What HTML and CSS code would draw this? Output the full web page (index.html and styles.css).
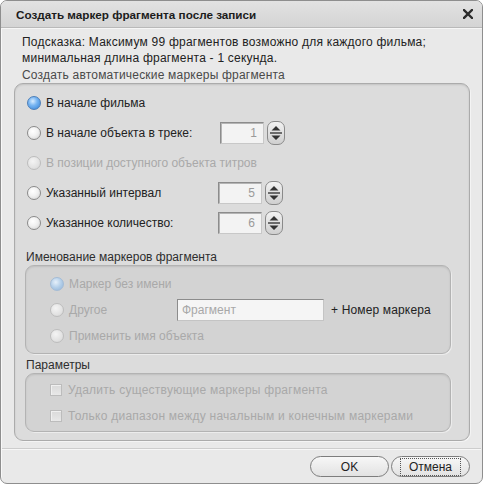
FILE: index.html
```html
<!DOCTYPE html>
<html lang="ru">
<head>
<meta charset="utf-8">
<link rel="stylesheet" href="styles.css">
</head>
<body>
<div class="window">
  <div class="titlebar">
    <span class="title">Создать маркер фрагмента после записи</span>
    <svg class="close" width="10" height="10" viewBox="0 0 10 10"><path d="M1 1 L9 9 M9 1 L1 9" stroke="#2b2b2b" stroke-width="2.4" stroke-linecap="square"/></svg>
  </div>
  <div class="body">
    <p class="hint">Подсказка: Максимум 99 фрагментов возможно для каждого фильма;<br>минимальная длина фрагмента - 1 секунда.</p>
    <div class="group-label">Создать автоматические маркеры фрагмента</div>
    <div class="group main">
      <div class="row"><span class="radio checked"></span><span class="lbl">В начале фильма</span></div>
      <div class="row"><span class="radio"></span><span class="lbl w1">В начале объекта в треке:</span><span class="num">1</span><span class="spin"><svg width="18" height="24" viewBox="0 0 18 24"><path d="M9 5 L13.5 9.5 H4.5 Z M9 19 L13.5 14.5 H4.5 Z" fill="#333"/><path d="M3 12 H15" stroke="#444" stroke-width="1.5"/></svg></span></div>
      <div class="row disabled"><span class="radio"></span><span class="lbl">В позиции доступного объекта титров</span></div>
      <div class="row"><span class="radio"></span><span class="lbl w2">Указанный интервал</span><span class="num">5</span><span class="spin"><svg width="18" height="24" viewBox="0 0 18 24"><path d="M9 5 L13.5 9.5 H4.5 Z M9 19 L13.5 14.5 H4.5 Z" fill="#333"/><path d="M3 12 H15" stroke="#444" stroke-width="1.5"/></svg></span></div>
      <div class="row"><span class="radio"></span><span class="lbl w2">Указанное количество:</span><span class="num">6</span><span class="spin"><svg width="18" height="24" viewBox="0 0 18 24"><path d="M9 5 L13.5 9.5 H4.5 Z M9 19 L13.5 14.5 H4.5 Z" fill="#333"/><path d="M3 12 H15" stroke="#444" stroke-width="1.5"/></svg></span></div>

      <div class="sub-label first">Именование маркеров фрагмента</div>
      <div class="group sub naming">
        <div class="srow disabled"><span class="radio checked"></span><span class="lbl">Маркер без имени</span></div>
        <div class="srow disabled"><span class="radio"></span><span class="lbl w3">Другое</span><span class="text-input">Фрагмент</span><span class="suffix">+ Номер маркера</span></div>
        <div class="srow disabled"><span class="radio"></span><span class="lbl">Применить имя объекта</span></div>
      </div>

      <div class="sub-label">Параметры</div>
      <div class="group sub params">
        <div class="srow disabled"><span class="check"></span><span class="lbl wide">Удалить существующие маркеры фрагмента</span></div>
        <div class="srow disabled"><span class="check"></span><span class="lbl wide">Только диапазон между начальным и конечным маркерами</span></div>
      </div>
    </div>
    <div class="separator"></div>
    <div class="buttons">
      <button class="btn">OK</button>
      <button class="btn focus"><span>Отмена</span></button>
    </div>
  </div>
</div>
</body>
</html>
```

FILE: styles.css
```css
html, body {
  margin: 0;
  padding: 0;
  background: #ffffff;
}
body {
  font-family: "Liberation Sans", Arial, sans-serif;
  font-size: 12px;
  color: #222;
}
.window {
  width: 483px;
  height: 484px;
  box-sizing: border-box;
  border: 1px solid #8e8e8e;
  border-radius: 7px;
  background: #e9e9e9;
  box-shadow: inset 1px 1px 0 #f8f8f8;
  overflow: hidden;
  display: flex;
  flex-direction: column;
}
.titlebar {
  height: 26px;
  flex: none;
  display: flex;
  align-items: center;
  justify-content: space-between;
  padding: 0 9px 0 15px;
  background: linear-gradient(#e2e2e2, #d4d4d4);
  border-bottom: 1px solid #b9b9b9;
  box-shadow: 0 1px 0 #f6f6f6;
}
.title {
  font-weight: bold;
  font-size: 11.7px;
  color: #1c1c1c;
  padding-top: 1px;
}
.close {
  display: block;
}
.body {
  flex: 1;
  display: flex;
  flex-direction: column;
  padding: 6px 12px 0 13px;
}
.hint {
  margin: 0 0 0 8px;
  line-height: 16px;
  color: #222;
  letter-spacing: 0.22px;
}
.group-label {
  margin: 1px 0 0 8px;
  line-height: 16px;
  color: #4a4a4a;
  letter-spacing: 0.2px;
}
.group {
  border: 1px solid #ababab;
  border-radius: 9px;
  box-sizing: border-box;
}
.main {
  margin-top: 0;
  background: #dcdcdc;
  box-shadow: inset 0 1px 2px rgba(0,0,0,0.12), 1px 1px 0 #f4f4f4;
  padding: 4px 18px 5px 10px;
  height: 358px;
}
.row {
  height: 30px;
  display: flex;
  align-items: center;
  padding-left: 2px;
}
.radio {
  width: 12px;
  height: 12px;
  border-radius: 50%;
  border: 1px solid #8a8a8a;
  background: radial-gradient(circle at 40% 35%, #ffffff 0%, #f1f1f1 45%, #cfcfcf 100%);
  flex: none;
  margin-right: 5px;
  box-sizing: content-box;
}
.radio.checked {
  border-color: #4d7fb8;
  background: radial-gradient(circle at 40% 35%, #d8ecff 0%, #79b6f2 40%, #2f7fd6 100%);
}
.lbl {
  white-space: nowrap;
  color: #222;
}
.lbl.wide {
  letter-spacing: 0.25px;
}
.w1 { width: 174px; }
.w2 { width: 174px; margin-right: -2px; }
.w3 { width: 108px; }
.num {
  width: 44px;
  height: 22px;
  box-sizing: border-box;
  border: 1px solid #8c8c8c;
  border-right-color: #c8c8c8;
  border-bottom-color: #c8c8c8;
  box-shadow: inset 1px 1px 0 #b4b4b4;
  background: #f3f3f3;
  color: #9a9a9a;
  text-align: right;
  padding-right: 6px;
  line-height: 20px;
  font-size: 12px;
}
.spin {
  width: 18px;
  height: 24px;
  margin-left: 3px;
  box-sizing: border-box;
  border: 1px solid #8a8a8a;
  border-radius: 7px;
  background: linear-gradient(#f2f2f2, #cfcfcf);
  display: flex;
  align-items: center;
  justify-content: center;
  overflow: hidden;
}
.spin svg {
  display: block;
  flex: none;
}
.disabled .lbl {
  color: #a9a9a9;
}
.disabled .radio {
  border-color: #bdbdbd;
  background: radial-gradient(circle at 40% 35%, #f4f4f4 0%, #e2e2e2 60%, #d2d2d2 100%);
}
.disabled .radio.checked {
  border-color: #a4bcd6;
  background: radial-gradient(circle at 40% 35%, #e6f0fa 0%, #b4cfe9 50%, #8fb3d9 100%);
}
.sub-label {
  margin: 3px 0 0 1px;
  line-height: 16px;
  color: #2e2e2e;
}
.sub-label.first {
  margin-top: 11px;
}
.sub {
  background: #d3d3d3;
  border-color: #b3b3b3;
  border-radius: 9px;
  box-shadow: inset 0 1px 2px rgba(0,0,0,0.1), 1px 1px 0 #ececec;
  margin-right: 0;
}
.naming {
  height: 89px;
  padding: 5px 0 0 24px;
}
.params {
  height: 59px;
  padding: 3px 0 0 24px;
}
.srow {
  height: 26px;
  display: flex;
  align-items: center;
}
.text-input {
  width: 147px;
  height: 22px;
  box-sizing: border-box;
  border: 1px solid #8c8c8c;
  border-right-color: #c4c4c4;
  border-bottom-color: #c4c4c4;
  background: #f5f5f5;
  color: #a8a8a8;
  padding-left: 4px;
  line-height: 20px;
}
.suffix {
  margin-left: 7px;
  color: #222;
  white-space: nowrap;
  letter-spacing: 0.15px;
}
.check {
  width: 10px;
  height: 10px;
  border: 1px solid #bcbcbc;
  background: linear-gradient(#dadada, #e8e8e8);
  box-shadow: inset 1px 1px 0 #f0f0f0;
  margin: 0 6px 0 0;
  flex: none;
}
.separator {
  margin: 7px -11px 0 -12px;
  height: 1px;
  background: #cdcdcd;
  border-bottom: 1px solid #f7f7f7;
}
.buttons {
  display: flex;
  justify-content: flex-end;
  gap: 2px;
  margin-top: 6px;
  padding-right: 0;
}
.btn {
  width: 79px;
  height: 21px;
  border: 1px solid #7d7d7d;
  border-radius: 11px;
  background: linear-gradient(#f7f7f7, #e2e2e2);
  font-family: "Liberation Sans", Arial, sans-serif;
  font-size: 12px;
  color: #222;
  padding: 0;
  display: flex;
  align-items: center;
  justify-content: center;
}
.btn.focus span {
  border: 1px dotted #555;
  padding: 1px 8px;
  line-height: 14px;
}
```
